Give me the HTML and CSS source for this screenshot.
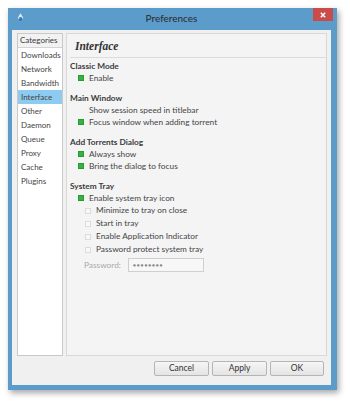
FILE: index.html
```html
<!DOCTYPE html>
<html>
<head>
<meta charset="utf-8">
<link rel="stylesheet" href="styles.css">
</head>
<body>
<div class="window">
  <div class="titlebar">
    <svg class="app-icon" width="7" height="9" viewBox="0 0 7 9"><path d="M3.5 0.3 L6.3 5 A3 3 0 0 1 0.7 5 Z" fill="#e3eef8"/><circle cx="3.5" cy="5.8" r="1.9" fill="#2e6fb3"/><circle cx="2.9" cy="5.2" r="0.6" fill="#9cc6ea"/></svg>
    <div class="title">Preferences</div>
    <div class="close"><svg width="6" height="6" viewBox="0 0 6 6"><path d="M0.8 0.8 L5.2 5.2 M5.2 0.8 L0.8 5.2" stroke="#fff" stroke-width="1.4"/></svg></div>
  </div>
  <div class="client">
    <div class="panes">
      <div class="cats">
        <div class="cats-head">Categories</div>
        <div class="cat">Downloads</div>
        <div class="cat">Network</div>
        <div class="cat">Bandwidth</div>
        <div class="cat sel">Interface</div>
        <div class="cat">Other</div>
        <div class="cat">Daemon</div>
        <div class="cat">Queue</div>
        <div class="cat">Proxy</div>
        <div class="cat">Cache</div>
        <div class="cat">Plugins</div>
      </div>
      <div class="page">
        <div class="page-title">Interface</div>
        <div class="sep"></div>
        <div class="sec first">Classic Mode</div>
        <div class="row"><span class="cb on"></span>Enable</div>
        <div class="sec">Main Window</div>
        <div class="row"><span class="cb blank"></span>Show session speed in titlebar</div>
        <div class="row"><span class="cb on"></span>Focus window when adding torrent</div>
        <div class="sec">Add Torrents Dialog</div>
        <div class="row"><span class="cb on"></span>Always show</div>
        <div class="row"><span class="cb on"></span>Bring the dialog to focus</div>
        <div class="sec">System Tray</div>
        <div class="row"><span class="cb on"></span>Enable system tray icon</div>
        <div class="row sub"><span class="cb off"></span>Minimize to tray on close</div>
        <div class="row sub"><span class="cb off"></span>Start in tray</div>
        <div class="row sub"><span class="cb off"></span>Enable Application Indicator</div>
        <div class="row sub"><span class="cb off"></span>Password protect system tray</div>
        <div class="pw"><span class="pw-label">Password:</span><span class="pw-input">●●●●●●●●</span></div>
      </div>
    </div>
    <div class="buttons">
      <div class="btn b-cancel">Cancel</div>
      <div class="btn b-apply">Apply</div>
      <div class="btn b-ok">OK</div>
    </div>
  </div>
</div>
</body>
</html>
```

FILE: styles.css
```css
html, body {
  margin: 0;
  padding: 0;
  background: #ffffff;
}
body {
  width: 350px;
  height: 403px;
  overflow: hidden;
  font-family: "Lato", "Open Sans", sans-serif;
  color: #444;
}
.window {
  margin: 8px 0 0 8px;
  width: 329px;
  height: 382px;
  box-sizing: border-box;
  background: #5b9cca;
  padding: 0 6px 5px 4px;
  display: flex;
  flex-direction: column;
  box-shadow: 2px 3px 6px rgba(0,0,0,0.35);
}
.titlebar {
  height: 22px;
  display: flex;
  align-items: flex-start;
  position: relative;
}
.app-icon {
  margin: 5px 0 0 5px;
}
.title {
  position: absolute;
  left: 0;
  right: 0;
  top: 3px;
  text-align: center;
  font-size: 10px;
  line-height: 14px;
  color: #2a2a2a;
}
.close {
  margin-left: auto;
  margin-right: -2px;
  width: 20px;
  height: 13px;
  background: #c94c4a;
  display: flex;
  align-items: center;
  justify-content: center;
}
.client {
  flex: 1;
  background: #f0f0f0;
  display: flex;
  flex-direction: column;
  padding: 3px 4px 9px 5px;
}
.panes {
  flex: 1;
  display: flex;
  gap: 3px;
}
.cats {
  width: 44px;
  background: #fff;
  border: 1px solid #c9c9c9;
  font-size: 8px;
  color: #454545;
}
.cats-head {
  height: 13px;
  line-height: 13px;
  background: #f2f2f2;
  border-bottom: 1px solid #d4d4d4;
  padding-left: 2px;
  color: #3a3a3a;
}
.cat {
  height: 14px;
  line-height: 14px;
  padding-left: 3px;
  white-space: nowrap;
}
.cat.sel {
  background: #8ecbf0;
}
.page {
  flex: 1;
  background: #f4f4f4;
  border: 1px solid #d8d8d8;
  padding: 0 0 0 3px;
  font-size: 8.3px;
  color: #454545;
}
.page-title {
  margin-top: 5px;
  height: 14px;
  line-height: 14px;
  padding-left: 5px;
  font-family: "Liberation Serif", "DejaVu Serif", serif;
  font-weight: bold;
  font-style: italic;
  font-size: 11.5px;
  color: #333;
}
.sep {
  margin: 4px 0 0 0;
  height: 1px;
  background: #dcdcdc;
}
.sec {
  margin-top: 8px;
  height: 12px;
  line-height: 12px;
  font-weight: bold;
  color: #3c3c3c;
}
.sec.first {
  margin-top: 2px;
}
.row {
  height: 12px;
  line-height: 12px;
  display: flex;
  align-items: center;
  padding-left: 8px;
  white-space: nowrap;
}
.row.sub {
  height: 13px;
  line-height: 13px;
  padding-left: 15px;
}
.cb {
  width: 6px;
  height: 6px;
  box-sizing: border-box;
  margin-right: 5px;
  flex: none;
}
.cb.on {
  background: #33b540;
  border: 1px solid #2a9a35;
}
.cb.off {
  background: #f8f8f8;
  border: 1px solid #dcdcdc;
}
.cb.blank {
  background: transparent;
}
.pw {
  margin-top: 2px;
  height: 14px;
  display: flex;
  align-items: center;
  padding-left: 14px;
}
.pw-label {
  color: #a8a8a8;
  width: 44px;
}
.pw-input {
  width: 76px;
  height: 14px;
  box-sizing: border-box;
  border: 1px solid #cfcfcf;
  background: #f7f7f7;
  font-size: 5px;
  letter-spacing: 0.8px;
  line-height: 12px;
  padding-left: 4px;
  color: #8a8a8a;
}
.buttons {
  display: flex;
  justify-content: flex-end;
  gap: 3px;
  margin-top: 5px;
  padding-right: 3px;
}
.btn {
  height: 15px;
  box-sizing: border-box;
  border: 1px solid #b5b5b5;
  border-radius: 2px;
  background: linear-gradient(#f6f6f6, #e4e4e4);
  font-size: 8.5px;
  line-height: 13px;
  text-align: center;
  color: #333;
}
.b-cancel { width: 55px; }
.b-apply { width: 55px; }
.b-ok { width: 54px; }
```
